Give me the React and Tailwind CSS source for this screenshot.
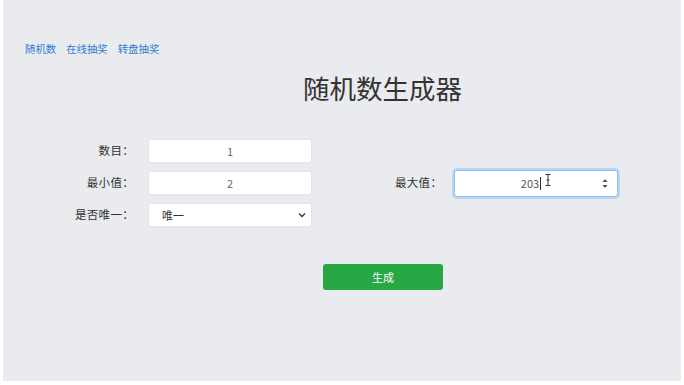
export default function App() {
  return (
    <div className="w-[684px] h-[385px] bg-white overflow-hidden">
      <div className="ml-[3px] w-[678px] h-[381px] bg-[#e9ebee] font-['Noto_Sans_CJK_SC','Noto_Sans',sans-serif] text-[#333]">
        <div className="pt-[41px] pl-[22px] flex gap-[10px] text-[10.4px] leading-[16px] text-[#2f7bd1]">
          <span>随机数</span>
          <span>在线抽奖</span>
          <span>转盘抽奖</span>
        </div>
        <div className="mt-[14px] pl-[300px] text-[26.5px] leading-[34px] text-[#333]">随机数生成器</div>
        <div className="mt-[34px] flex flex-col gap-[8px]">
          <div className="flex items-center h-[24px]">
            <div className="w-[131px] text-right text-[11.5px] tracking-[0.3px]">数目：</div>
            <div className="ml-[14px] w-[164px] h-[24px] bg-white border border-[#e2e4e8] rounded-[3px] flex items-center justify-center text-[11px] text-[#666]">1</div>
          </div>
          <div className="flex items-center h-[24px]">
            <div className="w-[131px] text-right text-[11.5px] tracking-[0.3px]">最小值：</div>
            <div className="ml-[14px] w-[164px] h-[24px] bg-white border border-[#e2e4e8] rounded-[3px] flex items-center justify-center text-[11px] text-[#666]">2</div>
            <div className="ml-[83px] w-[57px] text-[11.5px] tracking-[0.3px]">最大值：</div>
            <div className="relative ml-[2px] w-[164px] h-[27px] bg-white border border-[#8cbcf0] rounded-[3px] shadow-[0_0_0_2px_rgba(128,189,255,0.45)] flex items-center justify-center pr-[12px] text-[11px] text-[#555]">
              <span className="pl-[2px]">203</span>
              <span className="inline-block w-px h-[13px] bg-[#333] ml-[1px]"></span>
              <svg className="absolute left-[90px] top-[3px]" width="6" height="12" viewBox="0 0 6 12">
                <path d="M0.5 0.5 H5.5 M3 0.5 V11.5 M0.5 11.5 H5.5 M1.5 6 H4.5" stroke="#333" strokeWidth="1" fill="none" />
              </svg>
              <svg className="absolute right-[9px] top-[7px]" width="6" height="11" viewBox="0 0 6 11">
                <path d="M0.5 4 L3 1 L5.5 4 Z" fill="#555" />
                <path d="M0.5 7 L3 10 L5.5 7 Z" fill="#555" />
              </svg>
            </div>
          </div>
          <div className="flex items-center h-[24px]">
            <div className="w-[131px] text-right text-[11.5px] tracking-[0.3px]">是否唯一：</div>
            <div className="ml-[14px] w-[164px] h-[24px] bg-white border border-[#e2e4e8] rounded-[3px] flex items-center justify-between pl-[13px] pr-[5px] text-[11px] text-[#333]">
              <span>唯一</span>
              <svg width="8" height="6" viewBox="0 0 8 6">
                <path d="M1 1.5 L4 4.5 L7 1.5" stroke="#333" strokeWidth="1.3" fill="none" />
              </svg>
            </div>
          </div>
        </div>
        <div className="mt-[37px] ml-[320px] w-[120px] h-[26px] bg-[#28a745] rounded-[3px] flex items-center justify-center text-white text-[11px]">生成</div>
      </div>
    </div>
  );
}
